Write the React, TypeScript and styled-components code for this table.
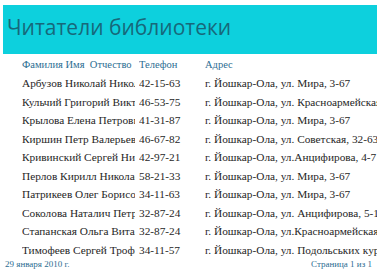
import styled, { createGlobalStyle } from 'styled-components';

const GlobalStyle = createGlobalStyle`
  html, body {
    margin: 0;
    padding: 0;
    background: #fff;
  }
`;

const Page = styled.div`
  width: 377px;
  height: 270px;
  overflow: hidden;
  font-family: 'Liberation Serif', 'DejaVu Serif', serif;
  font-variant-numeric: oldstyle-nums;
`;

const TitleBand = styled.header`
  margin: 5px 0 0 3px;
  height: 49px;
  background: #0dd0dd;
  padding: 8px 0 0 4px;
  box-sizing: border-box;
`;

const Title = styled.h1`
  margin: 0;
  font-family: 'Open Sans', 'Noto Sans', sans-serif;
  font-weight: 400;
  font-size: 21px;
  line-height: 28px;
  color: #17687a;
`;

const Table = styled.div`
  display: flex;
  flex-direction: column;
  padding: 1px 0 0 22px;
`;

const Row = styled.div<{ $head?: boolean }>`
  display: grid;
  grid-template-columns: 113px 62px 1fr;
  column-gap: 4px;
  height: ${(p) => (p.$head ? '19px' : '18.5px')};
  align-items: center;
  font-size: ${(p) => (p.$head ? '10.5px' : '11.3px')};
  color: ${(p) => (p.$head ? '#2c6d92' : '#262626')};
`;

const Cell = styled.span`
  white-space: nowrap;
  overflow: hidden;
`;

const Footer = styled.footer`
  display: flex;
  justify-content: space-between;
  align-items: center;
  height: 10px;
  padding: 0 5px 0 5px;
  font-size: 9px;
  color: #2c6d92;
`;

const readers = [
  ['Арбузов Николай Николаевич', '42-15-63', 'г. Йошкар-Ола, ул. Мира, 3-67'],
  ['Кульчий Григорий Викторович', '46-53-75', 'г. Йошкар-Ола, ул. Красноармейская, 12'],
  ['Крылова Елена Петровна', '41-31-87', 'г. Йошкар-Ола, ул. Мира, 3-67'],
  ['Киршин Петр Валерьевич', '46-67-82', 'г. Йошкар-Ола, ул. Советская, 32-63'],
  ['Кривинский Сергей Николаевич', '42-97-21', 'г. Йошкар-Ола, ул.Анцифирова, 4-7'],
  ['Перлов Кирилл Николаевич', '58-21-33', 'г. Йошкар-Ола, ул. Мира, 3-67'],
  ['Патрикеев Олег Борисович', '34-11-63', 'г. Йошкар-Ола, ул. Мира, 3-67'],
  ['Соколова Наталич Петровна', '32-87-24', 'г. Йошкар-Ола, ул. Анцифирова, 5-17'],
  ['Стапанская Ольга Витальевна', '32-87-24', 'г. Йошкар-Ола, ул.Красноармейская, 15'],
  ['Тимофеев Сергей Трофимович', '34-11-57', 'г. Йошкар-Ола, ул. Подольських курсантов, 3'],
];

export default function App() {
  return (
    <Page>
      <GlobalStyle />
      <TitleBand>
        <Title>Читатели библиотеки</Title>
      </TitleBand>
      <Table>
        <Row $head>
          <Cell>Фамилия Имя&nbsp; Отчество</Cell>
          <Cell>Телефон</Cell>
          <Cell>Адрес</Cell>
        </Row>
        {readers.map(([name, phone, addr]) => (
          <Row key={name}>
            <Cell>{name}</Cell>
            <Cell>{phone}</Cell>
            <Cell>{addr}</Cell>
          </Row>
        ))}
      </Table>
      <Footer>
        <span>29 января 2010 г.</span>
        <span>Страница 1 из 1</span>
      </Footer>
    </Page>
  );
}
